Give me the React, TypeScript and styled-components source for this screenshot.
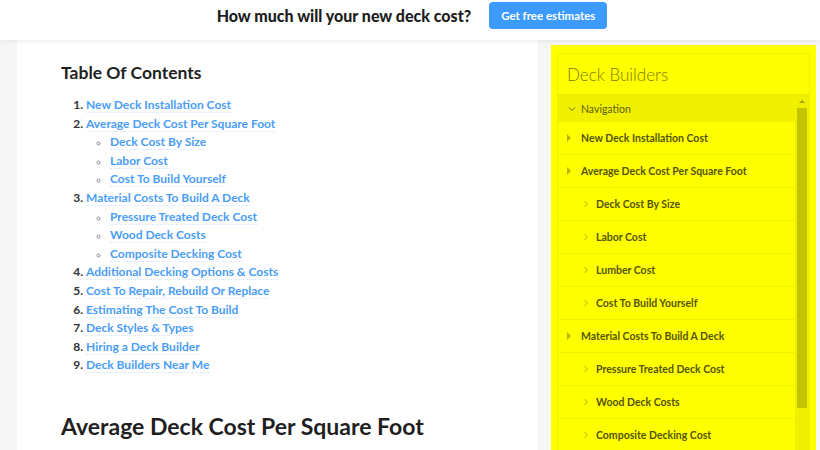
import React from "react";
import styled, { createGlobalStyle } from "styled-components";

const Global = createGlobalStyle`
  html, body { margin: 0; padding: 0; background: #f6f6f6; }
  body { font-family: "Lato", "Noto Sans", sans-serif; overflow: hidden; }
  * { box-sizing: border-box; }
`;

const Page = styled.div`
  width: 820px;
  height: 450px;
  display: flex;
  flex-direction: column;
  overflow: hidden;
`;

const TopBar = styled.header`
  height: 40px;
  flex: none;
  background: #fff;
  box-shadow: 0 1px 6px rgba(0, 0, 0, 0.08);
  display: flex;
  align-items: flex-start;
  justify-content: center;
  gap: 18px;
  padding: 2px 0 0 4px;
  position: relative;
  z-index: 2;
`;

const TopTitle = styled.div`
  font-size: 16px;
  line-height: 28px;
  font-weight: 900;
  color: #1d1d1d;
`;

const CtaButton = styled.button`
  height: 27px;
  padding: 0 12px;
  border: none;
  border-radius: 4px;
  background: #3d9bff;
  color: #fff;
  font-family: inherit;
  font-size: 11.5px;
  font-weight: 700;
`;

const Body = styled.div`
  flex: 1;
  display: flex;
  padding-left: 17px;
  min-height: 0;
`;

const Main = styled.main`
  width: 521px;
  flex: none;
  background: #fff;
  padding: 22px 0 0 44px;
`;

const Heading = styled.h3`
  margin: 0 0 13px;
  font-size: 17.5px;
  font-weight: 700;
  color: #222;
`;

const Ordered = styled.ol`
  margin: 0;
  padding-left: 25px;
  li::marker { color: #333; font-weight: 700; }
`;

const Bullets = styled.ul`
  margin: 0;
  padding-left: 24px;
  list-style: circle;
  li::marker { color: #888; font-size: 10px; }
`;

const Item = styled.li`
  font-size: 12px;
  line-height: 18.6px;
  font-weight: 700;
`;

const TocLink = styled.a`
  color: #4a9df7;
  text-decoration: none;
  border-bottom: 1px dotted #d5e6fb;
`;

const SectionTitle = styled.h2`
  margin: 37px 0 0;
  font-size: 23px;
  font-weight: 700;
  color: #1f1f1f;
`;

const Gutter = styled.div`
  width: 13px;
  flex: none;
`;

const Sidebar = styled.aside`
  width: 265px;
  flex: none;
  margin-top: 5px;
  background: #ffff00;
  padding: 8px 6px 0;
`;

const Card = styled.div`
  height: 100%;
  border: 1px solid #f0f000;
  border-bottom: none;
  border-radius: 4px 4px 0 0;
  display: flex;
  flex-direction: column;
`;

const CardHeader = styled.div`
  height: 41px;
  flex: none;
  display: flex;
  align-items: center;
  padding-left: 9px;
  font-size: 17px;
  font-weight: 300;
  color: #7c7c00;
  border-bottom: 1px solid #eaea00;
`;

const NavArea = styled.div`
  flex: 1;
  display: flex;
  min-height: 0;
`;

const NavList = styled.div`
  flex: 1;
  display: flex;
  flex-direction: column;
`;

const NavTitle = styled.div`
  height: 27px;
  flex: none;
  display: flex;
  align-items: center;
  gap: 5px;
  padding-left: 10px;
  background: #f0f000;
  color: #5e5e00;
  font-size: 10.5px;
  font-weight: 400;
`;

const NavRow = styled.div<{ $sub?: boolean }>`
  height: 33px;
  flex: none;
  display: flex;
  align-items: center;
  gap: ${(p) => (p.$sub ? "6px" : "8px")};
  padding-left: ${(p) => (p.$sub ? "24px" : "9px")};
  border-bottom: 1px solid #f1f100;
  color: #545400;
  font-size: 10.5px;
  font-weight: 700;
`;

const Caret = styled.span`
  width: 0;
  height: 0;
  border-top: 4px solid transparent;
  border-bottom: 4px solid transparent;
  border-left: 4px solid #b5b500;
  margin-right: 2px;
`;

const Scrollbar = styled.div`
  width: 14px;
  flex: none;
  background: #efef00;
  display: flex;
  flex-direction: column;
  align-items: center;
  padding-top: 5px;
`;

const UpArrow = styled.div`
  width: 0;
  height: 0;
  border-left: 3px solid transparent;
  border-right: 3px solid transparent;
  border-bottom: 3px solid #a0a000;
`;

const Thumb = styled.div`
  width: 10px;
  height: 300px;
  margin-top: 5px;
  background: #c3c300;
`;

const Chevron = ({ dir }: { dir: "right" | "down" }) => (
  <svg width="8" height="8" viewBox="0 0 8 8" style={{ flex: "none" }}>
    {dir === "right" ? (
      <path d="M2.5 1 L5.5 4 L2.5 7" fill="none" stroke="#b0b000" strokeWidth="1" />
    ) : (
      <path d="M1 2.5 L4 5.5 L7 2.5" fill="none" stroke="#6a6a00" strokeWidth="1" />
    )}
  </svg>
);

type Toc = { t: string; sub?: string[] };
const toc: Toc[] = [
  { t: "New Deck Installation Cost" },
  { t: "Average Deck Cost Per Square Foot", sub: ["Deck Cost By Size", "Labor Cost", "Cost To Build Yourself"] },
  { t: "Material Costs To Build A Deck", sub: ["Pressure Treated Deck Cost", "Wood Deck Costs", "Composite Decking Cost"] },
  { t: "Additional Decking Options & Costs" },
  { t: "Cost To Repair, Rebuild Or Replace" },
  { t: "Estimating The Cost To Build" },
  { t: "Deck Styles & Types" },
  { t: "Hiring a Deck Builder" },
  { t: "Deck Builders Near Me" },
];

const nav: { t: string; sub?: boolean }[] = [
  { t: "New Deck Installation Cost" },
  { t: "Average Deck Cost Per Square Foot" },
  { t: "Deck Cost By Size", sub: true },
  { t: "Labor Cost", sub: true },
  { t: "Lumber Cost", sub: true },
  { t: "Cost To Build Yourself", sub: true },
  { t: "Material Costs To Build A Deck" },
  { t: "Pressure Treated Deck Cost", sub: true },
  { t: "Wood Deck Costs", sub: true },
  { t: "Composite Decking Cost", sub: true },
];

export default function App() {
  return (
    <Page>
      <Global />
      <TopBar>
        <TopTitle>How much will your new deck cost?</TopTitle>
        <CtaButton>Get free estimates</CtaButton>
      </TopBar>
      <Body>
        <Main>
          <Heading>Table Of Contents</Heading>
          <Ordered>
            {toc.map((e) => (
              <Item key={e.t}>
                <TocLink>{e.t}</TocLink>
                {e.sub && (
                  <Bullets>
                    {e.sub.map((s) => (
                      <Item key={s}>
                        <TocLink>{s}</TocLink>
                      </Item>
                    ))}
                  </Bullets>
                )}
              </Item>
            ))}
          </Ordered>
          <SectionTitle>Average Deck Cost Per Square Foot</SectionTitle>
        </Main>
        <Gutter />
        <Sidebar>
          <Card>
            <CardHeader>Deck Builders</CardHeader>
            <NavArea>
              <NavList>
                <NavTitle>
                  <Chevron dir="down" />
                  Navigation
                </NavTitle>
                {nav.map((n) => (
                  <NavRow key={n.t} $sub={n.sub}>
                    {n.sub ? <Chevron dir="right" /> : <Caret />}
                    {n.t}
                  </NavRow>
                ))}
              </NavList>
              <Scrollbar>
                <UpArrow />
                <Thumb />
              </Scrollbar>
            </NavArea>
          </Card>
        </Sidebar>
      </Body>
    </Page>
  );
}
